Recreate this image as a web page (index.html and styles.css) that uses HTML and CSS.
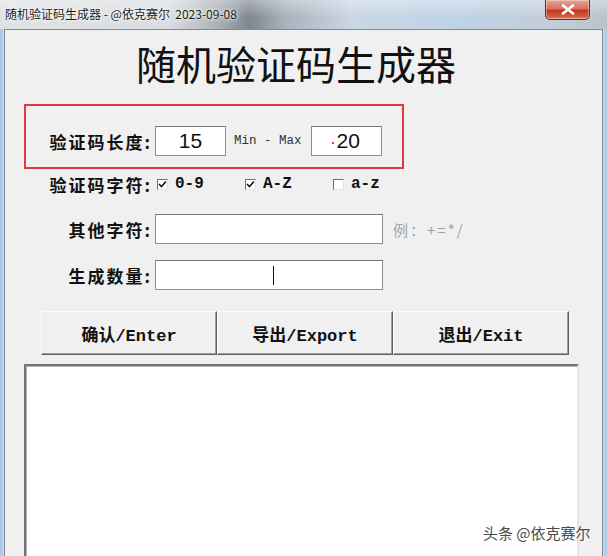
FILE: index.html
```html
<!DOCTYPE html>
<html lang="zh-CN">
<head>
    <meta charset="UTF-8">
    <meta name="viewport" content="width=device-width, initial-scale=1.0">
    <title>随机验证码生成器</title>
    <link rel="stylesheet" href="styles.css">
</head>
<body>
    <div class="window">
        <div class="titlebar">
            <span class="caption">随机验证码生成器 - @依克赛尔&nbsp; 2023-09-08</span>
            <div class="close-btn">
                <svg width="14" height="11" viewBox="0 0 14 11">
                    <path d="M2 1.5 L12 9.5 M12 1.5 L2 9.5" stroke="#fff" stroke-width="2.6" stroke-linecap="round"/>
                </svg>
            </div>
        </div>

        <div class="frame">
            <div class="client">
                <h1 class="heading">随机验证码生成器</h1>

                <div class="length-box">
                    <div class="row">
                        <label class="label">验证码长度:</label>
                        <div class="field short">15</div>
                        <span class="range">Min - Max</span>
                        <div class="field short max"><i class="dot"></i>20</div>
                    </div>
                </div>

                <div class="row charset">
                    <label class="label">验证码字符:</label>
                    <div class="opt">
                        <span class="check on"><svg width="9" height="9" viewBox="0 0 9 9"><path d="M1 4 L3.5 6.5 L8 1.5" fill="none" stroke="#111" stroke-width="1.6"/></svg></span>
                        <span class="opt-text">0-9</span>
                    </div>
                    <div class="opt">
                        <span class="check on"><svg width="9" height="9" viewBox="0 0 9 9"><path d="M1 4 L3.5 6.5 L8 1.5" fill="none" stroke="#111" stroke-width="1.6"/></svg></span>
                        <span class="opt-text">A-Z</span>
                    </div>
                    <div class="opt">
                        <span class="check"></span>
                        <span class="opt-text">a-z</span>
                    </div>
                </div>

                <div class="row gap">
                    <label class="label">其他字符:</label>
                    <div class="field wide"></div>
                    <span class="hint">例：+=*/</span>
                </div>

                <div class="row gap">
                    <label class="label">生成数量:</label>
                    <div class="field wide"><span class="caret"></span></div>
                </div>

                <div class="buttons">
                    <button class="btn">确认/Enter</button>
                    <button class="btn">导出/Export</button>
                    <button class="btn">退出/Exit</button>
                </div>

                <div class="output"></div>
            </div>
        </div>

        <div class="watermark">头条 @依克赛尔</div>
    </div>
</body>
</html>
```

FILE: styles.css
```css
body {
    margin: 0;
    background: #f0f0f0;
    font-family: "Noto Sans CJK SC", "Liberation Sans", sans-serif;
}

.window {
    position: relative;
    width: 607px;
    height: 556px;
    overflow: hidden;
    display: flex;
    flex-direction: column;
    background: linear-gradient(to right, #a4c3e6 0, #c4d9ef 4px, #c4d9ef 603px, #a9c8ea 607px);
}

/* aero style caption bar */
.titlebar {
    height: 29px;
    flex-shrink: 0;
    display: flex;
    justify-content: space-between;
    align-items: flex-start;
    background:
        linear-gradient(to bottom, rgba(255,255,255,0.35), rgba(255,255,255,0) 60%),
        linear-gradient(to right, #dfe2e5 0%, #d9dde1 28%, #a9b0b6 36%, #7f878f 41%, #a6b2bd 47%, #c9d7e3 58%, #bfd3e6 75%, #c2cdd7 92%, #b9c3cc 100%);
}

.caption {
    padding: 6px 0 0 5px;
    font-size: 12px;
    line-height: 16px;
    color: #1e1e1e;
    text-shadow: 0 0 6px #fff, 0 0 3px #fff;
}

.close-btn {
    width: 43px;
    height: 19px;
    margin-right: 17px;
    display: flex;
    align-items: center;
    justify-content: center;
    border: 1px solid #6d2a22;
    border-top: none;
    border-radius: 0 0 5px 5px;
    background: linear-gradient(to bottom, #e9a393 0%, #d8735f 45%, #c1381f 55%, #cf5a3c 85%, #e2866a 100%);
    box-shadow: inset 0 0 0 1px rgba(255,255,255,0.35);
}

.frame {
    flex: 1;
    display: flex;
    padding: 0 4px;
    min-height: 0;
}

.client {
    flex: 1;
    display: flex;
    flex-direction: column;
    border: 1px solid #7f8b97;
    border-bottom: none;
    background: #f0f0f0;
    overflow: hidden;
}

.heading {
    margin: 9px 0 0;
    padding-right: 15px;
    text-align: center;
    font-size: 40px;
    line-height: 48px;
    font-weight: 400;
    color: #111;
}

.length-box {
    width: 380px;
    height: 65px;
    margin: 17px 0 0 19px;
    padding: 20px 0 11px 10px;
    border: 2px solid #e3373c;
    box-sizing: border-box;
}

.row {
    display: flex;
    align-items: center;
    height: 30px;
}

.charset,
.gap {
    margin-left: 31px;
}

.charset {
    height: 24px;
    margin-top: 3px;
}

.gap {
    margin-top: 16px;
}

.charset + .gap {
    margin-top: 18px;
}

.label {
    width: 116px;
    margin-right: 3px;
    text-align: right;
    font-size: 17px;
    font-weight: 700;
    letter-spacing: 2px;
    color: #111;
    white-space: nowrap;
}

.field {
    height: 30px;
    box-sizing: border-box;
    border: 1px solid #8d8f92;
    border-top-color: #75777a;
    background: #fff;
    display: flex;
    align-items: center;
}

.short {
    width: 71px;
    justify-content: center;
    font-family: "Liberation Sans", sans-serif;
    font-size: 21px;
    color: #111;
}

.max {
    justify-content: flex-start;
    padding-left: 20px;
}

.wide {
    width: 228px;
}

.dot {
    width: 2px;
    height: 2px;
    margin: 4px 3px 0 0;
    background: #e23a3a;
}

.range {
    margin: 0 9px 0 8px;
    font-family: "Liberation Mono", monospace;
    font-size: 12.5px;
    color: #333;
}

.opt {
    width: 88px;
    display: flex;
    align-items: center;
}

.charset .label {
    margin-right: 5px;
}

.check {
    width: 11px;
    height: 11px;
    box-sizing: border-box;
    border: 1px solid;
    border-color: #6f6f6f #e2e2e2 #e2e2e2 #6f6f6f;
    background: #fff;
    display: flex;
    align-items: center;
    justify-content: center;
}

.opt-text {
    margin-left: 7px;
    font-family: "Liberation Mono", monospace;
    font-weight: 700;
    font-size: 16px;
    color: #111;
}

.hint {
    margin-left: 10px;
    font-size: 15px;
    letter-spacing: 2px;
    color: #a3a3a3;
}

.caret {
    width: 1px;
    height: 19px;
    margin-left: 117px;
    background: #111;
}

.buttons {
    display: flex;
    margin: 21px 0 0 36px;
}

.btn {
    width: 176px;
    height: 44px;
    padding: 0;
    border: 1px solid;
    border-color: #fdfdfd #5f5f5f #5f5f5f #fdfdfd;
    box-shadow: inset -1px -1px 0 #a0a0a0;
    background: #f0f0f0;
    font-family: "Liberation Mono", "Noto Sans CJK SC", monospace;
    font-size: 17px;
    font-weight: 700;
    color: #111;
}

.output {
    width: 555px;
    height: 220px;
    flex-shrink: 0;
    margin: 9px 0 0 19px;
    box-sizing: border-box;
    border: 2px solid;
    border-color: #747474 #e6e6e6 #e6e6e6 #747474;
    box-shadow: inset 1px 1px 0 #b4b4b4;
    background: #fff;
}

/* toutiao watermark over the bottom corner */
.watermark {
    position: absolute;
    left: 483px;
    top: 522px;
    font-size: 15px;
    color: #4a4a4a;
    text-shadow: 0 0 2px #fff, 1px 1px 1px #fff;
}
```
